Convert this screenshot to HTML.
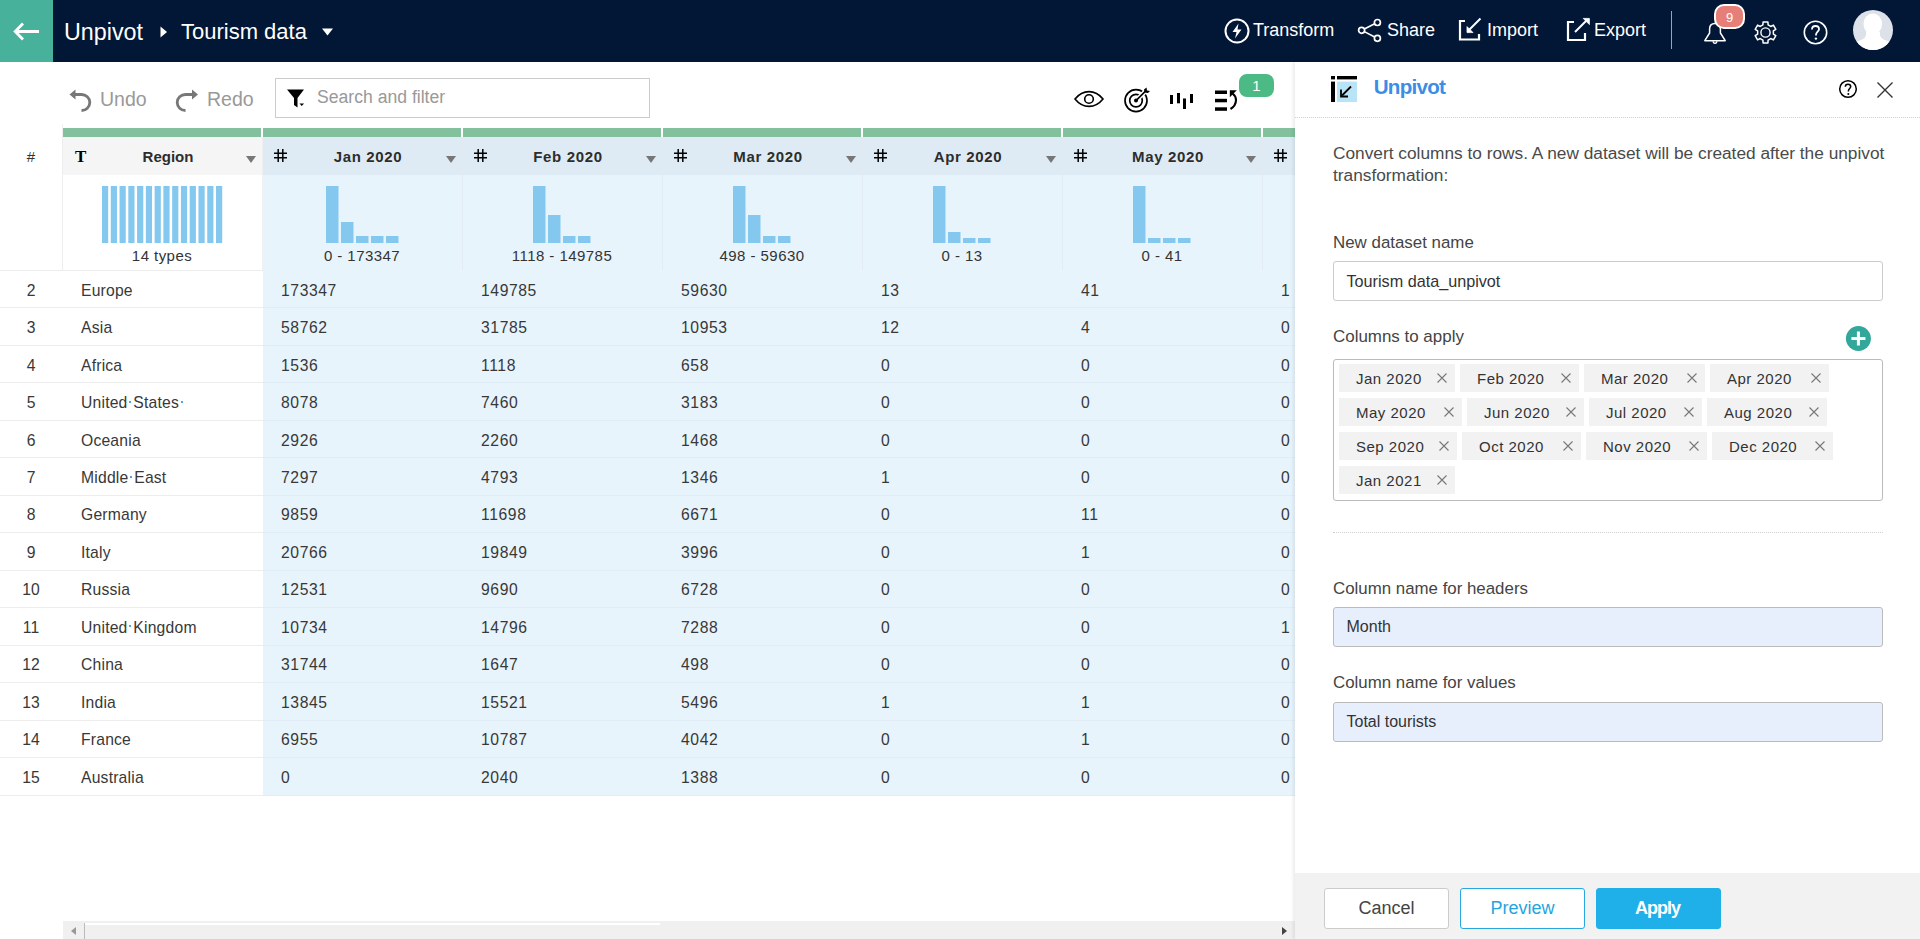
<!DOCTYPE html><html><head><meta charset="utf-8"><title>Unpivot</title><style>
*{box-sizing:border-box;margin:0;padding:0}
html,body{width:1920px;height:939px;overflow:hidden;background:#fff;font-family:"Liberation Sans",sans-serif;color:#333}
.abs{position:absolute}
#top{position:absolute;left:0;top:0;width:1920px;height:62px;background:#021635}
#back{position:absolute;left:0;top:0;width:53px;height:62px;background:#47b19c}
.tt{position:absolute;color:#fff;white-space:nowrap;line-height:1}
#tbl div,#tbl span{position:absolute}
.vl{width:1px;background:#eee}
.gbar{top:128px;height:9px;background:#82c09e}
.hdr{top:137px;height:38px}
.hdr.reg{background:#f5f5f5}
.hdr.num{background:#deebf5}
.hist{top:175px;height:95px}
.hist.reg{background:#fff}
.hist.num{background:#e8f4fc}
.csep{top:137px;width:1px;height:133px;background:#e2ebf1}
.hnum{left:0;top:147px;width:62px;text-align:center;font-size:15px;line-height:20px;color:#333}
.ticon{left:12px;top:9.5px;font-family:"Liberation Serif",serif;font-weight:bold;font-size:17px;line-height:20px;color:#000}
.hash{position:absolute;left:11px;top:12px}
.hname{left:5px;width:200px;top:10px;text-align:center;font-weight:bold;font-size:15px;line-height:20px;color:#2d2d2d}
.tri{right:7px;top:19px;width:0;height:0;border-left:5.5px solid transparent;border-right:5.5px solid transparent;border-top:7px solid #777}
.hlab{top:246px;width:198px;text-align:center;font-size:15px;letter-spacing:0.45px;line-height:20px;color:#333}
.dblue{background:#e8f4fc}
.rl{left:0;width:263px;height:1px;background:#ededed}
.rlb{left:263px;width:1032px;height:1px;background:#e0edf6}
.rn{left:0;width:62px;text-align:center;font-size:15.7px;line-height:1;color:#383838}
.cell{font-size:15.7px;line-height:1;letter-spacing:0.6px;color:#383838;white-space:nowrap}
#tbl .wd{position:static;display:inline-block;width:2px;height:2px;margin:0 2px 0 1.8px;background:#4da6e8;vertical-align:5.5px}
#hscroll{position:absolute;left:63px;top:921px;width:1232px;height:18px;background:#f0f0f0}
#hscroll .thumb{position:absolute;left:22px;top:2px;width:575px;height:2px;background:#fff}
#hscroll .vline{position:absolute;left:21px;top:2px;width:1px;height:16px;background:#bbb}
#hscroll .sl{position:absolute;left:8px;top:6px;width:0;height:0;border-top:4.5px solid transparent;border-bottom:4.5px solid transparent;border-right:5px solid #999}
#hscroll .sr{position:absolute;right:7.7px;top:6px;width:0;height:0;border-top:4.5px solid transparent;border-bottom:4.5px solid transparent;border-left:5.3px solid #444}
#panel{position:absolute;left:1295px;top:62px;width:625px;height:877px;background:#fff;box-shadow:-2px 0 3px rgba(0,0,0,0.08)}
#panel .p{position:absolute;white-space:nowrap;line-height:1}
.chip{position:absolute;height:28px;background:#f2f2f2;font-size:15px;line-height:30px;color:#333;padding-left:17px;letter-spacing:0.5px;white-space:nowrap}
.chip svg{position:absolute;top:9px}
.inp{position:absolute;left:38px;width:550px;height:40px;border:1px solid #ccc;border-radius:3px;font-size:16px;line-height:38px;padding-left:13px;color:#333}
.btn{position:absolute;top:826px;height:41px;width:125px;border-radius:3px;font-size:18px;line-height:39px;text-align:center}

.cell.t{letter-spacing:0.2px}

.hname.m{letter-spacing:0.65px}

</style></head><body>
<div id="top">
<div id="back"><svg width="53" height="62" viewBox="0 0 53 62"><path d="M15 31.5H39M23 23.5L15.2 31.5L23 39.5" stroke="#fff" stroke-width="2.8" fill="none" stroke-linecap="butt" stroke-linejoin="miter"/></svg></div>
<div class="tt" style="left:64px;top:21px;font-size:23.3px">Unpivot</div>
<svg class="abs" style="left:160px;top:26px" width="8" height="12"><path d="M0.5 0.5L7 6L0.5 11.5Z" fill="#fff"/></svg>
<div class="tt" style="left:181px;top:21px;font-size:22px">Tourism data</div>
<svg class="abs" style="left:322px;top:28px" width="11" height="8"><path d="M0 0.5H11L5.5 7.5Z" fill="#fff"/></svg>
<svg class="abs" style="left:1222.5px;top:16.5px" width="28" height="28" viewBox="0 0 28 28"><circle cx="14" cy="14" r="11.5" stroke="#fff" stroke-width="2" fill="none"/><path d="M15.5 6.5L9.5 15H13.5L12 21.5L18.5 12.5H14.5Z" fill="#fff"/></svg>
<div class="tt" style="left:1253px;top:21px;font-size:18px">Transform</div>
<svg class="abs" style="left:1356px;top:17px" width="27" height="27" viewBox="0 0 27 27"><circle cx="5.6" cy="13.3" r="3" stroke="#fff" stroke-width="1.7" fill="none"/><circle cx="21.4" cy="5.5" r="3" stroke="#fff" stroke-width="1.7" fill="none"/><circle cx="21.4" cy="21.3" r="3" stroke="#fff" stroke-width="1.7" fill="none"/><path d="M8.3 12L18.7 6.8M8.3 14.6L18.7 20" stroke="#fff" stroke-width="1.6"/></svg>
<div class="tt" style="left:1387px;top:21px;font-size:18px">Share</div>
<svg class="abs" style="left:1458px;top:17px" width="26" height="25" viewBox="0 0 26 25"><path d="M7 4H2V22.5H21V17" stroke="#fff" stroke-width="2.2" fill="none"/><path d="M22.5 1.5L10 14" stroke="#fff" stroke-width="2"/><path d="M9 9.6V15.6H15Z" fill="#fff" stroke="#fff" stroke-width="0.8"/></svg>
<div class="tt" style="left:1487px;top:21px;font-size:18px">Import</div>
<svg class="abs" style="left:1566px;top:17px" width="26" height="25" viewBox="0 0 26 25"><path d="M8 5H2V23H19V16" stroke="#fff" stroke-width="2.2" fill="none"/><path d="M9 15L20 4" stroke="#fff" stroke-width="2"/><path d="M23.4 1.4H17.2L23.4 7.6Z" fill="#fff" stroke="#fff" stroke-width="0.8"/></svg>
<div class="tt" style="left:1594px;top:21px;font-size:18px">Export</div>
<div class="abs" style="left:1671px;top:11px;width:1px;height:38px;background:#9aa3b0"></div>
<svg class="abs" style="left:1701px;top:20px" width="27" height="26" viewBox="0 0 27 26"><path d="M14 3.5C10.5 3.5 8.6 5.8 8.6 9V13L3.8 20.7H24.2L19.4 13V9C19.4 5.8 17.5 3.5 14 3.5Z" stroke="#fff" stroke-width="1.5" fill="none" stroke-linejoin="round"/><path d="M12.2 21.2C12.2 22.6 13 23.3 14 23.3S15.8 22.6 15.8 21.2" stroke="#fff" stroke-width="1.3" fill="none"/></svg>
<div class="abs" style="left:1714px;top:4px;width:31px;height:25px;border-radius:10px;background:#e57f77;border:2px solid #fff;color:#fff;font-size:13px;line-height:23px;text-align:center">9</div>
<svg class="abs" style="left:1753px;top:20px" width="25" height="25" viewBox="0 0 25 25"><path d="M9.90 4.94 L10.07 1.98 L14.93 1.98 L15.10 4.94 L17.75 6.46 L20.40 5.13 L22.83 9.34 L20.35 10.97 L20.35 14.03 L22.83 15.66 L20.40 19.87 L17.75 18.54 L15.10 20.06 L14.93 23.02 L10.07 23.02 L9.90 20.06 L7.25 18.54 L4.60 19.87 L2.17 15.66 L4.65 14.03 L4.65 10.97 L2.17 9.34 L4.60 5.13 L7.25 6.46Z" stroke="#fff" stroke-width="1.5" fill="none" stroke-linejoin="round"/><circle cx="12.5" cy="12.5" r="4.6" stroke="#fff" stroke-width="1.4" fill="none"/></svg>
<svg class="abs" style="left:1803px;top:20px" width="25" height="25" viewBox="0 0 25 25"><circle cx="12.5" cy="12.5" r="11.2" stroke="#fff" stroke-width="1.6" fill="none"/><path d="M9 9.5C9 7.3 10.6 6 12.5 6S16 7.3 16 9.3C16 11.5 13 12 13 14.8V15.5" stroke="#fff" stroke-width="1.8" fill="none"/><circle cx="12.9" cy="18.6" r="1.2" fill="#fff"/></svg>
<svg class="abs" style="left:1853px;top:10px" width="40" height="40" viewBox="0 0 40 40"><defs><clipPath id="av"><circle cx="20" cy="20" r="20"/></clipPath><filter id="avb" x="-20%" y="-20%" width="140%" height="140%"><feGaussianBlur stdDeviation="0.7"/></filter></defs><circle cx="20" cy="20" r="20" fill="#dde1ea"/><g clip-path="url(#av)"><g fill="#fff" filter="url(#avb)"><ellipse cx="19.8" cy="14" rx="9.3" ry="10.5"/><path d="M13 22C13.5 27 12 29 4 31.5C0 32.5 -2 34 -2 42H42C42 34 40 32.5 36 31.5C28 29 26.5 27 27 22Z"/></g></g></svg>
</div>

<svg class="abs" style="left:68px;top:88px" width="26" height="26" viewBox="0 0 26 26"><path d="M4.5 6.5H13.5C18 6.5 21.8 10 21.8 14.5S18 22.5 13.5 22.5" stroke="#777" stroke-width="2.8" fill="none"/><path d="M1.5 6.5L7.5 1.5V11.5Z" fill="#777"/></svg>
<div class="tt" style="left:100px;top:90px;font-size:19.5px;color:#999">Undo</div>
<svg class="abs" style="left:174px;top:88px" width="26" height="26" viewBox="0 0 26 26"><path d="M19 6.5H11.5C7 6.5 3.2 10 3.2 14.5S7 22.5 11.5 22.5" stroke="#777" stroke-width="2.8" fill="none"/><path d="M24 6.5L18 1.5V11.5Z" fill="#777"/></svg>
<div class="tt" style="left:207px;top:90px;font-size:19.5px;color:#999">Redo</div>
<div class="abs" style="left:275px;top:78px;width:375px;height:40px;border:1px solid #ccc;background:#fff"></div>
<svg class="abs" style="left:286px;top:88px" width="21" height="22" viewBox="0 0 21 22"><path d="M1 1.5H18L11.5 10V19.5L8 17V10Z" fill="#000"/><path d="M13.5 15.5H18L15.75 18Z" fill="#000"/></svg>
<div class="tt" style="left:317px;top:89px;font-size:17.6px;color:#999">Search and filter</div>
<svg class="abs" style="left:1072px;top:88px" width="34" height="22" viewBox="0 0 34 22"><path d="M3 11C7 6 11.5 3.6 17 3.6S27 6 31 11C27 16 22.5 18.4 17 18.4S7 16 3 11Z" stroke="#000" stroke-width="1.6" fill="none"/><circle cx="17" cy="11" r="4.3" stroke="#000" stroke-width="1.6" fill="none"/></svg>
<svg class="abs" style="left:1122px;top:86px" width="29" height="29" viewBox="0 0 29 29"><circle cx="14" cy="14.6" r="11" stroke="#000" stroke-width="1.7" fill="none"/><circle cx="14" cy="14.6" r="6.3" stroke="#000" stroke-width="1.7" fill="none"/><path d="M14 14.6L24 4.6" stroke="#fff" stroke-width="4.5"/><circle cx="14" cy="14.6" r="2" fill="#000"/><path d="M14 14.6L23.5 5.1" stroke="#000" stroke-width="1.6"/><path d="M22 3.5L24.5 1.5L25 4.5L28 5L26 7L22.5 6.5Z" fill="#000"/></svg>
<svg class="abs" style="left:1168px;top:90px" width="28" height="22" viewBox="0 0 28 22"><rect x="2" y="5" width="3" height="9" fill="#000"/><rect x="9" y="3" width="3" height="10.3" fill="#000"/><rect x="15" y="8.5" width="3" height="10.5" fill="#000"/><rect x="22" y="4" width="3" height="9" fill="#000"/></svg>
<svg class="abs" style="left:1213px;top:88px" width="28" height="26" viewBox="0 0 28 26"><rect x="2" y="2.5" width="12" height="3.5" fill="#000"/><rect x="2" y="10.8" width="12" height="3.5" fill="#000"/><rect x="2" y="19.3" width="12" height="3.5" fill="#000"/><path d="M17.5 21C21.5 18.5 23 15.5 23 12C23 9 21.5 7 19.5 5.5" stroke="#000" stroke-width="2.1" fill="none"/><path d="M16.8 2.2H23.8L16.8 9.2Z" fill="#000"/></svg>
<div class="abs" style="left:1239px;top:74px;width:35px;height:23px;border-radius:8px;background:#4cba84;color:#fff;font-size:15px;line-height:23px;text-align:center">1</div>

<div id="tbl">
<div class="vl" style="left:62px;top:124px;height:146px"></div>
<div class="hnum">#</div>
<div class="gbar" style="left:63px;width:198px"></div>
<div class="hdr reg" style="left:63px;width:200px">
<span class="ticon">T</span>
<span class="hname">Region</span><span class="tri"></span>
</div>
<div class="hist reg" style="left:63px;width:200px"></div>
<div class="csep" style="left:262px;background:#f0f0f0"></div>
<div class="gbar" style="left:263px;width:198px"></div>
<div class="hdr num" style="left:263px;width:200px">
<svg class="hash" width="13" height="13" viewBox="0 0 13 13"><path d="M4.2 0V13M8.8 0V13M0 4.2H13M0 8.8H13" stroke="#000" stroke-width="1.5" fill="none"/></svg>
<span class="hname m">Jan 2020</span><span class="tri"></span>
</div>
<div class="hist num" style="left:263px;width:200px"></div>
<div class="csep" style="left:462px"></div>
<div class="gbar" style="left:463px;width:198px"></div>
<div class="hdr num" style="left:463px;width:200px">
<svg class="hash" width="13" height="13" viewBox="0 0 13 13"><path d="M4.2 0V13M8.8 0V13M0 4.2H13M0 8.8H13" stroke="#000" stroke-width="1.5" fill="none"/></svg>
<span class="hname m">Feb 2020</span><span class="tri"></span>
</div>
<div class="hist num" style="left:463px;width:200px"></div>
<div class="csep" style="left:662px"></div>
<div class="gbar" style="left:663px;width:198px"></div>
<div class="hdr num" style="left:663px;width:200px">
<svg class="hash" width="13" height="13" viewBox="0 0 13 13"><path d="M4.2 0V13M8.8 0V13M0 4.2H13M0 8.8H13" stroke="#000" stroke-width="1.5" fill="none"/></svg>
<span class="hname m">Mar 2020</span><span class="tri"></span>
</div>
<div class="hist num" style="left:663px;width:200px"></div>
<div class="csep" style="left:862px"></div>
<div class="gbar" style="left:863px;width:198px"></div>
<div class="hdr num" style="left:863px;width:200px">
<svg class="hash" width="13" height="13" viewBox="0 0 13 13"><path d="M4.2 0V13M8.8 0V13M0 4.2H13M0 8.8H13" stroke="#000" stroke-width="1.5" fill="none"/></svg>
<span class="hname m">Apr 2020</span><span class="tri"></span>
</div>
<div class="hist num" style="left:863px;width:200px"></div>
<div class="csep" style="left:1062px"></div>
<div class="gbar" style="left:1063px;width:198px"></div>
<div class="hdr num" style="left:1063px;width:200px">
<svg class="hash" width="13" height="13" viewBox="0 0 13 13"><path d="M4.2 0V13M8.8 0V13M0 4.2H13M0 8.8H13" stroke="#000" stroke-width="1.5" fill="none"/></svg>
<span class="hname m">May 2020</span><span class="tri"></span>
</div>
<div class="hist num" style="left:1063px;width:200px"></div>
<div class="csep" style="left:1262px"></div>
<div class="gbar" style="left:1263px;width:32px"></div>
<div class="hdr num" style="left:1263px;width:32px">
<svg class="hash" width="13" height="13" viewBox="0 0 13 13"><path d="M4.2 0V13M8.8 0V13M0 4.2H13M0 8.8H13" stroke="#000" stroke-width="1.5" fill="none"/></svg>
</div>
<div class="hist num" style="left:1263px;width:32px"></div>
<div class="dblue" style="left:263px;top:270px;width:1032px;height:526.0px"></div>
<div class="rl" style="top:270px"></div>
<div class="rl" style="top:307px"></div>
<div class="rlb" style="top:307px"></div>
<div class="rl" style="top:345px"></div>
<div class="rlb" style="top:345px"></div>
<div class="rl" style="top:382px"></div>
<div class="rlb" style="top:382px"></div>
<div class="rl" style="top:420px"></div>
<div class="rlb" style="top:420px"></div>
<div class="rl" style="top:457px"></div>
<div class="rlb" style="top:457px"></div>
<div class="rl" style="top:495px"></div>
<div class="rlb" style="top:495px"></div>
<div class="rl" style="top:532px"></div>
<div class="rlb" style="top:532px"></div>
<div class="rl" style="top:570px"></div>
<div class="rlb" style="top:570px"></div>
<div class="rl" style="top:607px"></div>
<div class="rlb" style="top:607px"></div>
<div class="rl" style="top:645px"></div>
<div class="rlb" style="top:645px"></div>
<div class="rl" style="top:682px"></div>
<div class="rlb" style="top:682px"></div>
<div class="rl" style="top:720px"></div>
<div class="rlb" style="top:720px"></div>
<div class="rl" style="top:757px"></div>
<div class="rlb" style="top:757px"></div>
<div class="rl" style="top:795px"></div>
<div class="rlb" style="top:795px"></div>
<svg id="hsvg" width="1295" height="100" style="position:absolute;left:0;top:175px">
<rect x="102.00" y="11" width="6.2" height="57" fill="#84c8ef"/>
<rect x="110.77" y="11" width="6.2" height="57" fill="#84c8ef"/>
<rect x="119.54" y="11" width="6.2" height="57" fill="#84c8ef"/>
<rect x="128.31" y="11" width="6.2" height="57" fill="#84c8ef"/>
<rect x="137.08" y="11" width="6.2" height="57" fill="#84c8ef"/>
<rect x="145.85" y="11" width="6.2" height="57" fill="#84c8ef"/>
<rect x="154.62" y="11" width="6.2" height="57" fill="#84c8ef"/>
<rect x="163.39" y="11" width="6.2" height="57" fill="#84c8ef"/>
<rect x="172.16" y="11" width="6.2" height="57" fill="#84c8ef"/>
<rect x="180.93" y="11" width="6.2" height="57" fill="#84c8ef"/>
<rect x="189.70" y="11" width="6.2" height="57" fill="#84c8ef"/>
<rect x="198.47" y="11" width="6.2" height="57" fill="#84c8ef"/>
<rect x="207.24" y="11" width="6.2" height="57" fill="#84c8ef"/>
<rect x="216.01" y="11" width="6.2" height="57" fill="#84c8ef"/>
<rect x="326" y="11" width="12.5" height="57" fill="#84c8ef"/>
<rect x="341" y="47" width="12.5" height="21" fill="#84c8ef"/>
<rect x="356" y="61" width="12.5" height="7" fill="#84c8ef"/>
<rect x="371" y="61" width="12.5" height="7" fill="#84c8ef"/>
<rect x="386" y="61" width="12.5" height="7" fill="#84c8ef"/>
<rect x="533" y="11" width="12.5" height="57" fill="#84c8ef"/>
<rect x="548" y="40" width="12.5" height="28" fill="#84c8ef"/>
<rect x="563" y="61" width="12.5" height="7" fill="#84c8ef"/>
<rect x="578" y="61" width="12.5" height="7" fill="#84c8ef"/>
<rect x="733" y="11" width="12.5" height="57" fill="#84c8ef"/>
<rect x="748" y="40" width="12.5" height="28" fill="#84c8ef"/>
<rect x="763" y="61" width="12.5" height="7" fill="#84c8ef"/>
<rect x="778" y="61" width="12.5" height="7" fill="#84c8ef"/>
<rect x="933" y="11" width="12.5" height="57" fill="#84c8ef"/>
<rect x="948" y="57" width="12.5" height="11" fill="#84c8ef"/>
<rect x="963" y="63" width="12.5" height="5" fill="#84c8ef"/>
<rect x="978" y="63" width="12.5" height="5" fill="#84c8ef"/>
<rect x="1133" y="11" width="12.5" height="57" fill="#84c8ef"/>
<rect x="1148" y="63" width="12.5" height="5" fill="#84c8ef"/>
<rect x="1163" y="63" width="12.5" height="5" fill="#84c8ef"/>
<rect x="1178" y="63" width="12.5" height="5" fill="#84c8ef"/>
</svg>
<div class="hlab" style="left:63px">14 types</div>
<div class="hlab" style="left:263px">0 - 173347</div>
<div class="hlab" style="left:463px">1118 - 149785</div>
<div class="hlab" style="left:663px">498 - 59630</div>
<div class="hlab" style="left:863px">0 - 13</div>
<div class="hlab" style="left:1063px">0 - 41</div>
<div class="rn" style="top:282.71px">2</div>
<div class="cell t" style="top:282.70995px;left:81px">Europe</div>
<div class="cell" style="top:282.70995px;left:281px">173347</div>
<div class="cell" style="top:282.70995px;left:481px">149785</div>
<div class="cell" style="top:282.70995px;left:681px">59630</div>
<div class="cell" style="top:282.70995px;left:881px">13</div>
<div class="cell" style="top:282.70995px;left:1081px">41</div>
<div class="cell" style="top:282.70995px;left:1281px">1</div>
<div class="rn" style="top:320.17px">3</div>
<div class="cell t" style="top:320.16995px;left:81px">Asia</div>
<div class="cell" style="top:320.16995px;left:281px">58762</div>
<div class="cell" style="top:320.16995px;left:481px">31785</div>
<div class="cell" style="top:320.16995px;left:681px">10953</div>
<div class="cell" style="top:320.16995px;left:881px">12</div>
<div class="cell" style="top:320.16995px;left:1081px">4</div>
<div class="cell" style="top:320.16995px;left:1281px">0</div>
<div class="rn" style="top:357.63px">4</div>
<div class="cell t" style="top:357.62995px;left:81px">Africa</div>
<div class="cell" style="top:357.62995px;left:281px">1536</div>
<div class="cell" style="top:357.62995px;left:481px">1118</div>
<div class="cell" style="top:357.62995px;left:681px">658</div>
<div class="cell" style="top:357.62995px;left:881px">0</div>
<div class="cell" style="top:357.62995px;left:1081px">0</div>
<div class="cell" style="top:357.62995px;left:1281px">0</div>
<div class="rn" style="top:395.09px">5</div>
<div class="cell t" style="top:395.08995px;left:81px">United<i class="wd"></i>States<i class="wd"></i></div>
<div class="cell" style="top:395.08995px;left:281px">8078</div>
<div class="cell" style="top:395.08995px;left:481px">7460</div>
<div class="cell" style="top:395.08995px;left:681px">3183</div>
<div class="cell" style="top:395.08995px;left:881px">0</div>
<div class="cell" style="top:395.08995px;left:1081px">0</div>
<div class="cell" style="top:395.08995px;left:1281px">0</div>
<div class="rn" style="top:432.55px">6</div>
<div class="cell t" style="top:432.54995px;left:81px">Oceania</div>
<div class="cell" style="top:432.54995px;left:281px">2926</div>
<div class="cell" style="top:432.54995px;left:481px">2260</div>
<div class="cell" style="top:432.54995px;left:681px">1468</div>
<div class="cell" style="top:432.54995px;left:881px">0</div>
<div class="cell" style="top:432.54995px;left:1081px">0</div>
<div class="cell" style="top:432.54995px;left:1281px">0</div>
<div class="rn" style="top:470.01px">7</div>
<div class="cell t" style="top:470.00995px;left:81px">Middle<i class="wd"></i>East</div>
<div class="cell" style="top:470.00995px;left:281px">7297</div>
<div class="cell" style="top:470.00995px;left:481px">4793</div>
<div class="cell" style="top:470.00995px;left:681px">1346</div>
<div class="cell" style="top:470.00995px;left:881px">1</div>
<div class="cell" style="top:470.00995px;left:1081px">0</div>
<div class="cell" style="top:470.00995px;left:1281px">0</div>
<div class="rn" style="top:507.47px">8</div>
<div class="cell t" style="top:507.46995px;left:81px">Germany</div>
<div class="cell" style="top:507.46995px;left:281px">9859</div>
<div class="cell" style="top:507.46995px;left:481px">11698</div>
<div class="cell" style="top:507.46995px;left:681px">6671</div>
<div class="cell" style="top:507.46995px;left:881px">0</div>
<div class="cell" style="top:507.46995px;left:1081px">11</div>
<div class="cell" style="top:507.46995px;left:1281px">0</div>
<div class="rn" style="top:544.93px">9</div>
<div class="cell t" style="top:544.9299500000001px;left:81px">Italy</div>
<div class="cell" style="top:544.9299500000001px;left:281px">20766</div>
<div class="cell" style="top:544.9299500000001px;left:481px">19849</div>
<div class="cell" style="top:544.9299500000001px;left:681px">3996</div>
<div class="cell" style="top:544.9299500000001px;left:881px">0</div>
<div class="cell" style="top:544.9299500000001px;left:1081px">1</div>
<div class="cell" style="top:544.9299500000001px;left:1281px">0</div>
<div class="rn" style="top:582.39px">10</div>
<div class="cell t" style="top:582.3899500000001px;left:81px">Russia</div>
<div class="cell" style="top:582.3899500000001px;left:281px">12531</div>
<div class="cell" style="top:582.3899500000001px;left:481px">9690</div>
<div class="cell" style="top:582.3899500000001px;left:681px">6728</div>
<div class="cell" style="top:582.3899500000001px;left:881px">0</div>
<div class="cell" style="top:582.3899500000001px;left:1081px">0</div>
<div class="cell" style="top:582.3899500000001px;left:1281px">0</div>
<div class="rn" style="top:619.85px">11</div>
<div class="cell t" style="top:619.84995px;left:81px">United<i class="wd"></i>Kingdom</div>
<div class="cell" style="top:619.84995px;left:281px">10734</div>
<div class="cell" style="top:619.84995px;left:481px">14796</div>
<div class="cell" style="top:619.84995px;left:681px">7288</div>
<div class="cell" style="top:619.84995px;left:881px">0</div>
<div class="cell" style="top:619.84995px;left:1081px">0</div>
<div class="cell" style="top:619.84995px;left:1281px">1</div>
<div class="rn" style="top:657.31px">12</div>
<div class="cell t" style="top:657.3099500000001px;left:81px">China</div>
<div class="cell" style="top:657.3099500000001px;left:281px">31744</div>
<div class="cell" style="top:657.3099500000001px;left:481px">1647</div>
<div class="cell" style="top:657.3099500000001px;left:681px">498</div>
<div class="cell" style="top:657.3099500000001px;left:881px">0</div>
<div class="cell" style="top:657.3099500000001px;left:1081px">0</div>
<div class="cell" style="top:657.3099500000001px;left:1281px">0</div>
<div class="rn" style="top:694.77px">13</div>
<div class="cell t" style="top:694.76995px;left:81px">India</div>
<div class="cell" style="top:694.76995px;left:281px">13845</div>
<div class="cell" style="top:694.76995px;left:481px">15521</div>
<div class="cell" style="top:694.76995px;left:681px">5496</div>
<div class="cell" style="top:694.76995px;left:881px">1</div>
<div class="cell" style="top:694.76995px;left:1081px">1</div>
<div class="cell" style="top:694.76995px;left:1281px">0</div>
<div class="rn" style="top:732.23px">14</div>
<div class="cell t" style="top:732.22995px;left:81px">France</div>
<div class="cell" style="top:732.22995px;left:281px">6955</div>
<div class="cell" style="top:732.22995px;left:481px">10787</div>
<div class="cell" style="top:732.22995px;left:681px">4042</div>
<div class="cell" style="top:732.22995px;left:881px">0</div>
<div class="cell" style="top:732.22995px;left:1081px">1</div>
<div class="cell" style="top:732.22995px;left:1281px">0</div>
<div class="rn" style="top:769.69px">15</div>
<div class="cell t" style="top:769.6899500000001px;left:81px">Australia</div>
<div class="cell" style="top:769.6899500000001px;left:281px">0</div>
<div class="cell" style="top:769.6899500000001px;left:481px">2040</div>
<div class="cell" style="top:769.6899500000001px;left:681px">1388</div>
<div class="cell" style="top:769.6899500000001px;left:881px">0</div>
<div class="cell" style="top:769.6899500000001px;left:1081px">0</div>
<div class="cell" style="top:769.6899500000001px;left:1281px">0</div>
</div>
<div id="hscroll"><div class="thumb"></div><div class="vline"></div><span class="sl"></span><span class="sr"></span></div>
<div id="panel">
<svg class="p" style="left:35px;top:13px" width="28" height="28" viewBox="0 0 28 28"><rect x="1" y="1" width="4" height="3.4" fill="#000"/><rect x="1" y="6.6" width="4" height="20.4" fill="#000"/><rect x="7" y="1" width="20" height="3.4" fill="#000"/><rect x="7" y="6.6" width="20" height="20.4" fill="#b9e3f7"/><path d="M21 11.5L12 20.5" stroke="#000" stroke-width="1.8"/><path d="M11 14.5V21.5H18" stroke="#000" stroke-width="1.8" fill="none"/></svg>
<div class="p" style="left:78.70px;top:15.46px;font-size:20.6px;color:#3a8ee6;font-weight:bold;letter-spacing:-0.75px">Unpivot</div>
<svg class="p" style="left:543px;top:17px" width="20" height="20" viewBox="0 0 20 20"><circle cx="10" cy="10" r="8.3" stroke="#000" stroke-width="1.5" fill="none"/><path d="M7.3 7.8C7.3 6.2 8.5 5.2 10 5.2S12.7 6.2 12.7 7.6C12.7 9.4 10.4 9.8 10.4 12V12.5" stroke="#000" stroke-width="1.5" fill="none"/><circle cx="10.3" cy="14.9" r="1" fill="#000"/></svg>
<svg class="p" style="left:582px;top:20px" width="16" height="16" viewBox="0 0 16 16"><path d="M0.5 0.5L15.5 15.5M15.5 0.5L0.5 15.5" stroke="#333" stroke-width="1.4"/></svg>
<div class="p" style="left:0;top:55px;width:625px;height:1px;border-top:1px dotted #d0d0d0"></div>
<div class="p" style="left:38.00px;top:83.06px;font-size:17.29px;color:#4a4a4a;font-weight:normal;">Convert columns to rows. A new dataset will be created after the unpivot</div>
<div class="p" style="left:38.00px;top:104.96px;font-size:17.29px;color:#4a4a4a;font-weight:normal;">transformation:</div>
<div class="p" style="left:38.00px;top:173.49px;font-size:16.9px;color:#444;font-weight:normal;">New dataset name</div>
<div class="inp" style="top:199px;background:#fff"></div>
<div class="p" style="left:51.50px;top:211.29px;font-size:16.2px;color:#333;font-weight:normal;">Tourism data_unpivot</div>
<div class="p" style="left:38.00px;top:267.25px;font-size:16.95px;color:#444;font-weight:normal;">Columns to apply</div>
<svg class="p" style="left:550px;top:263px" width="27" height="27" viewBox="0 0 27 27"><circle cx="13.4" cy="13.5" r="12.5" fill="#32a89a"/><path d="M13.4 6.5V20.5M6.4 13.5H20.4" stroke="#fff" stroke-width="3"/></svg>
<div class="p" style="left:38px;top:296.5px;width:550px;height:142px;border:1px solid #bbb;border-radius:3px"></div>
<div class="chip" style="left:44px;top:302.3px;width:116px">Jan 2020<svg style="left:98px" width="10" height="10" viewBox="0 0 10 10"><path d="M0.5 0.5L9.5 9.5M9.5 0.5L0.5 9.5" stroke="#777" stroke-width="1.1"/></svg></div>
<div class="chip" style="left:165px;top:302.3px;width:119px">Feb 2020<svg style="left:101px" width="10" height="10" viewBox="0 0 10 10"><path d="M0.5 0.5L9.5 9.5M9.5 0.5L0.5 9.5" stroke="#777" stroke-width="1.1"/></svg></div>
<div class="chip" style="left:289px;top:302.3px;width:121px">Mar 2020<svg style="left:103px" width="10" height="10" viewBox="0 0 10 10"><path d="M0.5 0.5L9.5 9.5M9.5 0.5L0.5 9.5" stroke="#777" stroke-width="1.1"/></svg></div>
<div class="chip" style="left:415px;top:302.3px;width:119px">Apr 2020<svg style="left:101px" width="10" height="10" viewBox="0 0 10 10"><path d="M0.5 0.5L9.5 9.5M9.5 0.5L0.5 9.5" stroke="#777" stroke-width="1.1"/></svg></div>
<div class="chip" style="left:44px;top:336.3px;width:123px">May 2020<svg style="left:105px" width="10" height="10" viewBox="0 0 10 10"><path d="M0.5 0.5L9.5 9.5M9.5 0.5L0.5 9.5" stroke="#777" stroke-width="1.1"/></svg></div>
<div class="chip" style="left:172px;top:336.3px;width:117px">Jun 2020<svg style="left:99px" width="10" height="10" viewBox="0 0 10 10"><path d="M0.5 0.5L9.5 9.5M9.5 0.5L0.5 9.5" stroke="#777" stroke-width="1.1"/></svg></div>
<div class="chip" style="left:294px;top:336.3px;width:113px">Jul 2020<svg style="left:95px" width="10" height="10" viewBox="0 0 10 10"><path d="M0.5 0.5L9.5 9.5M9.5 0.5L0.5 9.5" stroke="#777" stroke-width="1.1"/></svg></div>
<div class="chip" style="left:412px;top:336.3px;width:120px">Aug 2020<svg style="left:102px" width="10" height="10" viewBox="0 0 10 10"><path d="M0.5 0.5L9.5 9.5M9.5 0.5L0.5 9.5" stroke="#777" stroke-width="1.1"/></svg></div>
<div class="chip" style="left:44px;top:370.3px;width:118px">Sep 2020<svg style="left:100px" width="10" height="10" viewBox="0 0 10 10"><path d="M0.5 0.5L9.5 9.5M9.5 0.5L0.5 9.5" stroke="#777" stroke-width="1.1"/></svg></div>
<div class="chip" style="left:167px;top:370.3px;width:119px">Oct 2020<svg style="left:101px" width="10" height="10" viewBox="0 0 10 10"><path d="M0.5 0.5L9.5 9.5M9.5 0.5L0.5 9.5" stroke="#777" stroke-width="1.1"/></svg></div>
<div class="chip" style="left:291px;top:370.3px;width:121px">Nov 2020<svg style="left:103px" width="10" height="10" viewBox="0 0 10 10"><path d="M0.5 0.5L9.5 9.5M9.5 0.5L0.5 9.5" stroke="#777" stroke-width="1.1"/></svg></div>
<div class="chip" style="left:417px;top:370.3px;width:121px">Dec 2020<svg style="left:103px" width="10" height="10" viewBox="0 0 10 10"><path d="M0.5 0.5L9.5 9.5M9.5 0.5L0.5 9.5" stroke="#777" stroke-width="1.1"/></svg></div>
<div class="chip" style="left:44px;top:404.3px;width:116px">Jan 2021<svg style="left:98px" width="10" height="10" viewBox="0 0 10 10"><path d="M0.5 0.5L9.5 9.5M9.5 0.5L0.5 9.5" stroke="#777" stroke-width="1.1"/></svg></div>
<div class="p" style="left:38px;top:470px;width:550px;height:1px;border-top:1px dotted #d0d0d0"></div>
<div class="p" style="left:38.00px;top:518.52px;font-size:16.87px;color:#444;font-weight:normal;">Column name for headers</div>
<div class="inp" style="top:545.4px;background:#e8effc;border-color:#bbb"></div>
<div class="p" style="left:51.50px;top:557.36px;font-size:16px;color:#333;font-weight:normal;">Month</div>
<div class="p" style="left:38.00px;top:613.33px;font-size:16.86px;color:#444;font-weight:normal;">Column name for values</div>
<div class="inp" style="top:640.2px;background:#e8effc;border-color:#bbb"></div>
<div class="p" style="left:51.50px;top:651.56px;font-size:16px;color:#333;font-weight:normal;">Total tourists</div>
<div class="p" style="left:0;top:811px;width:625px;height:66px;background:#f2f2f2"></div>
<div class="btn" style="left:29px;background:#fff;border:1px solid #ccc;color:#444">Cancel</div>
<div class="btn" style="left:165px;background:#fff;border:1px solid #29a8e0;color:#1fa5e0">Preview</div>
<div class="btn" style="left:301px;background:#1fb0ea;border:1px solid #1fb0ea;color:#fff;font-weight:bold;letter-spacing:-1px;text-indent:-2px">Apply</div>
</div>
</body></html>
